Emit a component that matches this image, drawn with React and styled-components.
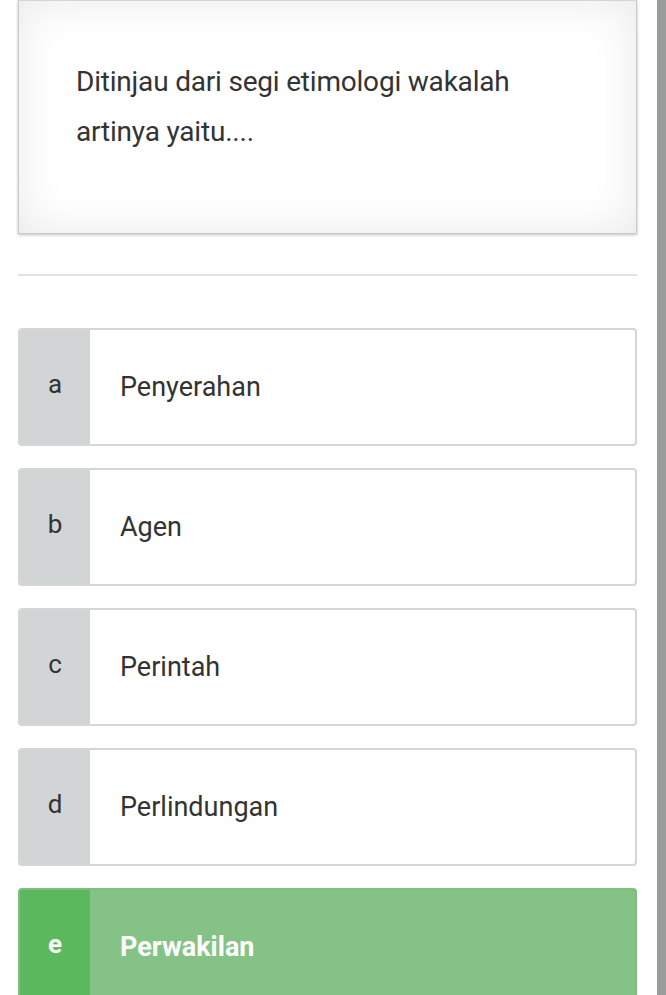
import React from "react";
import styled, { createGlobalStyle } from "styled-components";

const Global = createGlobalStyle`
  html, body { margin: 0; padding: 0; background: #fff; }
  body { font-family: Roboto, "Noto Sans", sans-serif; overflow: hidden; }
`;

const Page = styled.div`
  display: flex;
  width: 666px;
  height: 995px;
  overflow: hidden;
`;

const Main = styled.div`
  flex: 1;
  padding: 0 20px 0 18px;
  display: flex;
  flex-direction: column;
`;

const ScrollBar = styled.div`
  width: 9px;
  flex: none;
  background: #9a9c9c;
`;

const QuestionCard = styled.div`
  flex: none;
  border: 1px solid #c9c9c9;
  border-top-color: #d4d4d4;
  background: #fff;
  box-shadow: inset 0 0 45px rgba(0, 0, 0, 0.09), 0 1px 3px rgba(0, 0, 0, 0.25);
  padding: 56px 60px 77px 57px;
  height: 234px;
  box-sizing: border-box;
`;

const QuestionText = styled.p`
  margin: 0;
  font-size: 28px;
  line-height: 50px;
  color: #333;
  letter-spacing: -0.2px;
`;

const Divider = styled.div`
  flex: none;
  margin: 40px 0 52px;
  height: 2px;
  background: #e2e2e2;
`;

const Options = styled.div`
  display: flex;
  flex-direction: column;
  gap: 22px;
`;

const Option = styled.div`
  display: flex;
  flex: none;
  height: 118px;
  box-sizing: border-box;
  border: 2px solid ${(p) => (p.$correct ? "#7fbe7f" : "#d6d6d6")};
  border-radius: 4px;
  overflow: hidden;
  background: ${(p) => (p.$correct ? "#85c285" : "#fff")};
`;

const Letter = styled.div`
  width: 70px;
  flex: none;
  display: flex;
  align-items: center;
  justify-content: center;
  background: ${(p) => (p.$correct ? "#5cb85c" : "#d1d5d6")};
  color: ${(p) => (p.$correct ? "#fff" : "#333")};
  font-size: 26px;
  font-weight: ${(p) => (p.$correct ? 700 : 400)};
  padding-bottom: 6px;
`;

const Label = styled.div`
  display: flex;
  align-items: center;
  padding-left: 30px;
  font-size: 27px;
  color: ${(p) => (p.$correct ? "#fff" : "#333")};
  font-weight: ${(p) => (p.$correct ? 700 : 400)};
`;

const options = [
  { k: "a", t: "Penyerahan" },
  { k: "b", t: "Agen" },
  { k: "c", t: "Perintah" },
  { k: "d", t: "Perlindungan" },
  { k: "e", t: "Perwakilan", correct: true },
];

export default function App() {
  return (
    <>
      <Global />
      <Page>
        <Main>
          <QuestionCard>
            <QuestionText>Ditinjau dari segi etimologi wakalah artinya yaitu....</QuestionText>
          </QuestionCard>
          <Divider />
          <Options>
            {options.map((o) => (
              <Option key={o.k} $correct={o.correct}>
                <Letter $correct={o.correct}>{o.k}</Letter>
                <Label $correct={o.correct}>{o.t}</Label>
              </Option>
            ))}
          </Options>
        </Main>
        <ScrollBar />
      </Page>
    </>
  );
}
